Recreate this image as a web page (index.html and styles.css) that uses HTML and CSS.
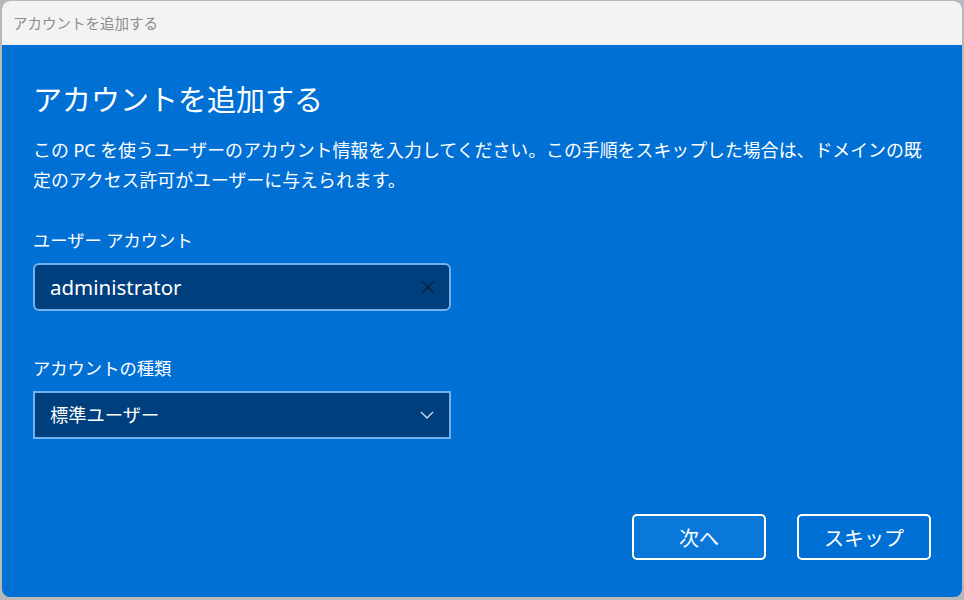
FILE: index.html
```html
<!DOCTYPE html>
<html lang="ja">
<head>
<meta charset="utf-8">
<title>アカウントを追加する</title>
<link rel="stylesheet" href="styles.css">
</head>
<body>
<div class="window">
  <header class="titlebar">アカウントを追加する</header>
  <main class="content">
    <h1 class="heading">アカウントを追加する</h1>
    <p class="desc">この PC を使うユーザーのアカウント情報を入力してください。この手順をスキップした場合は、ドメインの既<br>定のアクセス許可がユーザーに与えられます。</p>

    <label class="label">ユーザー アカウント</label>
    <div class="textbox">
      <span class="value">administrator</span>
      <svg class="clear" width="14" height="14" viewBox="0 0 14 14"><path d="M1.5 1.5 L12.5 12.5 M12.5 1.5 L1.5 12.5" stroke="#0b1e36" stroke-width="1.3" fill="none"/></svg>
    </div>

    <label class="label label-2">アカウントの種類</label>
    <div class="select">
      <span class="value value-jp">標準ユーザー</span>
      <svg class="chevron" width="14" height="8" viewBox="0 0 14 8"><path d="M1 1 L7 7 L13 1" stroke="#cfe0f4" stroke-width="1.3" fill="none"/></svg>
    </div>

    <div class="footer">
      <button class="btn btn-primary">次へ</button>
      <button class="btn">スキップ</button>
    </div>
  </main>
</div>
</body>
</html>
```

FILE: styles.css
```css
* { box-sizing: border-box; }
html, body {
  margin: 0;
  padding: 0;
  width: 964px;
  height: 600px;
  overflow: hidden;
  background: #b8b8b8;
  font-family: "Noto Sans", "Noto Sans CJK JP", sans-serif;
}
.window {
  margin: 1px 0 0 2px;
  width: 960px;
  height: 596px;
  border-radius: 8px;
  overflow: hidden;
  display: flex;
  flex-direction: column;
  background: #0170d4;
}
.titlebar {
  height: 44px;
  flex: none;
  background: #f3f3f3;
  color: #8d8d8d;
  font-size: 14.5px;
  line-height: 44px;
  padding-left: 11px;
}
.content {
  flex: 1;
  display: flex;
  flex-direction: column;
  padding: 35px 31px 37px 31px;
  color: #ffffff;
}
.heading {
  margin: 0;
  font-size: 29px;
  font-weight: 400;
  line-height: 40px;
}
.desc {
  margin: 15px 0 0 0;
  font-size: 17.9px;
  line-height: 30px;
  white-space: nowrap;
}
.label {
  display: block;
  margin-top: 33px;
  font-size: 17.3px;
  line-height: 26px;
}
.label-2 { margin-top: 45px; }
.textbox, .select {
  margin-top: 9px;
  width: 418px;
  height: 48px;
  display: flex;
  align-items: center;
  justify-content: space-between;
  padding: 0 14px 0 15px;
  background: #003f7e;
  border: 2px solid #72b0ee;
}
.textbox { border-radius: 6px; }
.value {
  font-size: 20.5px;
  color: #ffffff;
  line-height: 1;
}
.value-jp { font-size: 18.3px; }
.chevron { margin-right: 1px; }
.footer {
  margin-top: auto;
  display: flex;
  justify-content: flex-end;
  gap: 31px;
}
.btn {
  width: 134px;
  height: 46px;
  border: 2px solid #ffffff;
  border-radius: 5px;
  background: #0170d4;
  color: #ffffff;
  font-family: "Noto Sans CJK JP", sans-serif;
  font-size: 20px;
  padding: 0;
}
.btn-primary { background: #0a78d8; }
```
